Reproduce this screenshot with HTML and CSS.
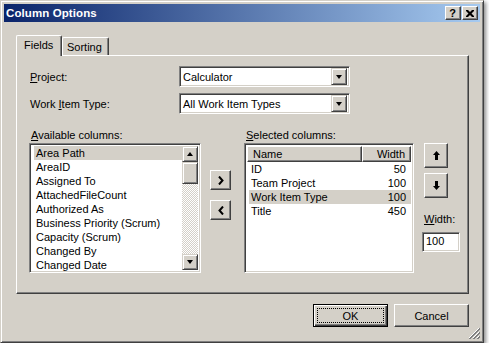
FILE: index.html
```html
<!DOCTYPE html>
<html lang="en">
<head>
    <meta charset="UTF-8">
    <title>Column Options</title>
    <link rel="stylesheet" href="styles.css">
</head>
<body>
    <div class="window">
        <!-- title bar -->
        <div class="titlebar">
            <span class="title">Column Options</span>
            <div class="caption-btns">
                <div class="cap-btn help">?</div>
                <div class="cap-btn">
                    <svg width="8" height="7" viewBox="0 0 8 7"><path d="M0 0h2l2 2 2-2h2v1L5.5 3.5 8 6v1H6L4 5 2 7H0V6l2.5-2.5L0 1z" fill="#000"/></svg>
                </div>
            </div>
        </div>

        <div class="client">
            <div class="tabs">
                <div class="tab active">Fields</div>
                <div class="tab">Sorting</div>
            </div>

            <div class="panel">
                <div class="field-row">
                    <div class="field-label"><u>P</u>roject:</div>
                    <div class="combo">
                        <span class="combo-text">Calculator</span>
                        <div class="combo-btn"><span class="tri-down"></span></div>
                    </div>
                </div>
                <div class="field-row second">
                    <div class="field-label">Work <u>I</u>tem Type:</div>
                    <div class="combo">
                        <span class="combo-text">All Work Item Types</span>
                        <div class="combo-btn"><span class="tri-down"></span></div>
                    </div>
                </div>

                <div class="lists">
                    <div class="col-avail">
                        <div class="list-label"><u>A</u>vailable columns:</div>
                        <div class="listbox">
                            <div class="items">
                                <div class="item selected">Area Path</div>
                                <div class="item">AreaID</div>
                                <div class="item">Assigned To</div>
                                <div class="item">AttachedFileCount</div>
                                <div class="item">Authorized As</div>
                                <div class="item">Business Priority (Scrum)</div>
                                <div class="item">Capacity (Scrum)</div>
                                <div class="item">Changed By</div>
                                <div class="item">Changed Date</div>
                            </div>
                            <div class="vscroll">
                                <div class="sb-btn"><span class="tri-up"></span></div>
                                <div class="sb-thumb"></div>
                                <div class="sb-track"></div>
                                <div class="sb-btn"><span class="tri-down"></span></div>
                            </div>
                        </div>
                    </div>

                    <div class="move-btns">
                        <div class="btn move">
                            <svg width="6" height="9" viewBox="0 0 6 9"><path d="M1 0.5L4.5 4.5 1 8.5" fill="none" stroke="#000" stroke-width="2"/></svg>
                        </div>
                        <div class="btn move">
                            <svg width="6" height="9" viewBox="0 0 6 9"><path d="M5 0.5L1.5 4.5 5 8.5" fill="none" stroke="#000" stroke-width="2"/></svg>
                        </div>
                    </div>

                    <div class="col-sel">
                        <div class="list-label"><u>S</u>elected columns:</div>
                        <div class="listview">
                            <div class="lv-header">
                                <div class="hd name">Name</div>
                                <div class="hd width">Width</div>
                            </div>
                            <div class="lv-row"><span>ID</span><span>50</span></div>
                            <div class="lv-row"><span>Team Project</span><span>100</span></div>
                            <div class="lv-row selected"><span>Work Item Type</span><span>100</span></div>
                            <div class="lv-row"><span>Title</span><span>450</span></div>
                        </div>
                    </div>

                    <div class="side">
                        <div class="btn order up">
                            <svg width="7" height="9" viewBox="0 0 7 9"><path d="M3.5 0L7 4H5v5H2V4H0z" fill="#000"/></svg>
                        </div>
                        <div class="btn order">
                            <svg width="7" height="9" viewBox="0 0 7 9"><path d="M2 0h3v5h2L3.5 9 0 5h2z" fill="#000"/></svg>
                        </div>
                        <div class="width-label"><u>W</u>idth:</div>
                        <div class="textbox">100</div>
                    </div>
                </div>
            </div>

            <div class="footer">
                <div class="btn push default"><span class="focus">OK</span></div>
                <div class="btn push">Cancel</div>
            </div>
        </div>

        <!-- size grip -->
        <svg class="grip" width="12" height="12" viewBox="0 0 12 12">
            <path d="M11 1L1 11M11 5L5 11M11 9L9 11" stroke="#fff" stroke-width="1"/>
            <path d="M12 1L1 12M12 2L2 12M12 5L5 12M12 6L6 12M12 9L9 12M12 10L10 12" stroke="#808080" stroke-width="1"/>
        </svg>
    </div>
</body>
</html>
```

FILE: styles.css
```css
/* page */
body {
    margin: 0;
    background-color: #fff;
    font-family: "Liberation Sans", Arial, sans-serif;
    font-size: 11px;
    color: #000;
}
u {
    text-decoration: underline;
    text-underline-offset: 1px;
}

/* dialog frame */
.window {
    position: relative;
    box-sizing: border-box;
    width: 484px;
    height: 343px;
    padding: 3px;
    background-color: #d4d0c8;
    border: 1px solid;
    border-color: #d4d0c8 #404040 #404040 #d4d0c8;
    box-shadow: inset 1px 1px #fff, inset -1px -1px #808080, 2px 2px 4px rgba(0, 0, 0, 0.45);
    display: flex;
    flex-direction: column;
}

/* title bar */
.titlebar {
    height: 18px;
    display: flex;
    align-items: center;
    justify-content: space-between;
    padding: 0 2px 0 2px;
    background: linear-gradient(to right, #0a246a, #a6caf0);
}
.title {
    color: #fff;
    font-weight: bold;
    font-size: 11.5px;
    letter-spacing: 0.1px;
}
.caption-btns {
    display: flex;
    gap: 1px;
}
.cap-btn {
    box-sizing: border-box;
    width: 16px;
    height: 14px;
    background-color: #d4d0c8;
    border: 1px solid;
    border-color: #fff #404040 #404040 #fff;
    box-shadow: inset -1px -1px #808080;
    display: flex;
    align-items: center;
    justify-content: center;
}
.cap-btn.help {
    font-weight: bold;
    font-size: 11px;
    line-height: 12px;
    padding-right: 1px;
}

/* client area */
.client {
    flex: 1;
    display: flex;
    flex-direction: column;
}
.tabs {
    height: 33px;
    display: flex;
    align-items: flex-end;
    padding-left: 12px;
}
.tab {
    box-sizing: border-box;
    height: 18px;
    padding: 2px 6px 0 4px;
    border: 1px solid;
    border-color: #fff #404040 transparent #fff;
    border-bottom: none;
    border-radius: 2px 2px 0 0;
    box-shadow: inset -1px 0 #808080;
    line-height: 15px;
}
.tab.active {
    position: relative;
    z-index: 1;
    width: 46px;
    height: 21px;
    margin-bottom: -1px;
    padding: 2px 0 0 7px;
    background-color: #d4d0c8;
}
.panel {
    box-sizing: border-box;
    width: 453px;
    height: 239px;
    margin-left: 12px;
    padding-top: 10px;
    border: 1px solid;
    border-color: #fff #404040 #404040 #fff;
    box-shadow: inset -1px -1px #808080;
}

/* sunken controls */
.combo,
.listbox,
.listview,
.textbox {
    box-sizing: border-box;
    background-color: #fff;
    border: 1px solid;
    border-color: #808080 #fff #fff #808080;
    box-shadow: inset 1px 1px #404040, inset -1px -1px #d4d0c8;
}

/* project / type rows */
.field-row {
    display: flex;
    align-items: center;
    height: 21px;
    padding-left: 13px;
}
.field-row.second {
    margin-top: 6px;
}
.field-label {
    width: 149px;
}
.combo {
    width: 171px;
    height: 21px;
    display: flex;
    align-items: center;
    justify-content: space-between;
    padding: 2px;
}
.combo-text {
    padding-left: 1px;
}
.combo-btn,
.sb-btn {
    box-sizing: border-box;
    width: 16px;
    height: 17px;
    background-color: #d4d0c8;
    border: 1px solid;
    border-color: #d4d0c8 #404040 #404040 #d4d0c8;
    box-shadow: inset 1px 1px #fff, inset -1px -1px #808080;
    display: flex;
    align-items: center;
    justify-content: center;
}
.tri-down,
.tri-up {
    width: 0;
    height: 0;
    border-left: 3.5px solid transparent;
    border-right: 3.5px solid transparent;
}
.tri-down {
    border-top: 4px solid #000;
}
.tri-up {
    border-bottom: 4px solid #000;
}

/* lower section */
.lists {
    display: flex;
    margin-top: 14px;
    padding-left: 12px;
}
.list-label {
    height: 15px;
    line-height: 14px;
    padding-left: 2px;
}
.col-avail {
    width: 172px;
}
.listbox {
    height: 130px;
    padding: 2px;
    display: flex;
}
.items {
    flex: 1;
    padding-left: 2px;
}
.item {
    height: 14px;
    line-height: 14px;
    padding-left: 2px;
    white-space: nowrap;
}
.item.selected,
.lv-row.selected {
    background-color: #d4d0c8;
}
.vscroll {
    width: 16px;
    display: flex;
    flex-direction: column;
}
.vscroll .sb-btn {
    height: 16px;
}
.sb-thumb {
    box-sizing: border-box;
    height: 22px;
    background-color: #d4d0c8;
    border: 1px solid;
    border-color: #d4d0c8 #404040 #404040 #d4d0c8;
    box-shadow: inset 1px 1px #fff, inset -1px -1px #808080;
}
.sb-track {
    flex: 1;
    background: repeating-conic-gradient(#d4d0c8 0 25%, #fff 0 50%) 0 0 / 2px 2px;
}

/* buttons */
.btn {
    box-sizing: border-box;
    background-color: #d4d0c8;
    border: 1px solid;
    border-color: #fff #404040 #404040 #fff;
    box-shadow: inset -1px -1px #808080;
    display: flex;
    align-items: center;
    justify-content: center;
}
.move-btns {
    display: flex;
    flex-direction: column;
    gap: 10px;
    margin-left: 9px;
    padding-top: 42px;
}
.btn.move {
    width: 21px;
    height: 20px;
}

/* selected columns list */
.col-sel {
    width: 170px;
    margin-left: 13px;
}
.listview {
    height: 130px;
    padding: 2px;
}
.lv-header {
    display: flex;
    height: 16px;
}
.hd {
    box-sizing: border-box;
    height: 16px;
    line-height: 14px;
    background-color: #d4d0c8;
    border: 1px solid;
    border-color: #fff #404040 #404040 #fff;
    box-shadow: inset -1px -1px #808080;
}
.hd.name {
    width: 116px;
    padding-left: 5px;
}
.hd.width {
    width: 50px;
    text-align: right;
    padding-right: 5px;
}
.lv-row {
    display: flex;
    justify-content: space-between;
    height: 14px;
    line-height: 14px;
    margin-left: 2px;
    padding: 0 5px 0 2px;
}

/* order + width */
.side {
    margin-left: 8px;
    width: 38px;
    padding-top: 15px;
}
.btn.order {
    width: 24px;
    height: 25px;
    margin-left: 2px;
}
.btn.order.up {
    margin-bottom: 5px;
}
.width-label {
    margin-top: 14px;
    height: 14px;
    line-height: 14px;
    padding-left: 2px;
}
.textbox {
    margin-top: 6px;
    width: 38px;
    height: 20px;
    line-height: 16px;
    padding-left: 3px;
}

/* OK / Cancel */
.footer {
    display: flex;
    justify-content: flex-end;
    gap: 6px;
    margin-top: 10px;
    padding-right: 11px;
}
.btn.push {
    width: 75px;
    height: 23px;
}
.btn.push.default {
    border: 1px solid #000;
    box-shadow: inset 1px 1px #fff, inset -1px -1px #404040, inset -2px -2px #808080;
    padding: 3px;
}
.focus {
    box-sizing: border-box;
    width: 100%;
    height: 100%;
    border: 1px dotted #000;
    display: flex;
    align-items: center;
    justify-content: center;
}
.grip {
    position: absolute;
    right: 3px;
    bottom: 3px;
}
```
